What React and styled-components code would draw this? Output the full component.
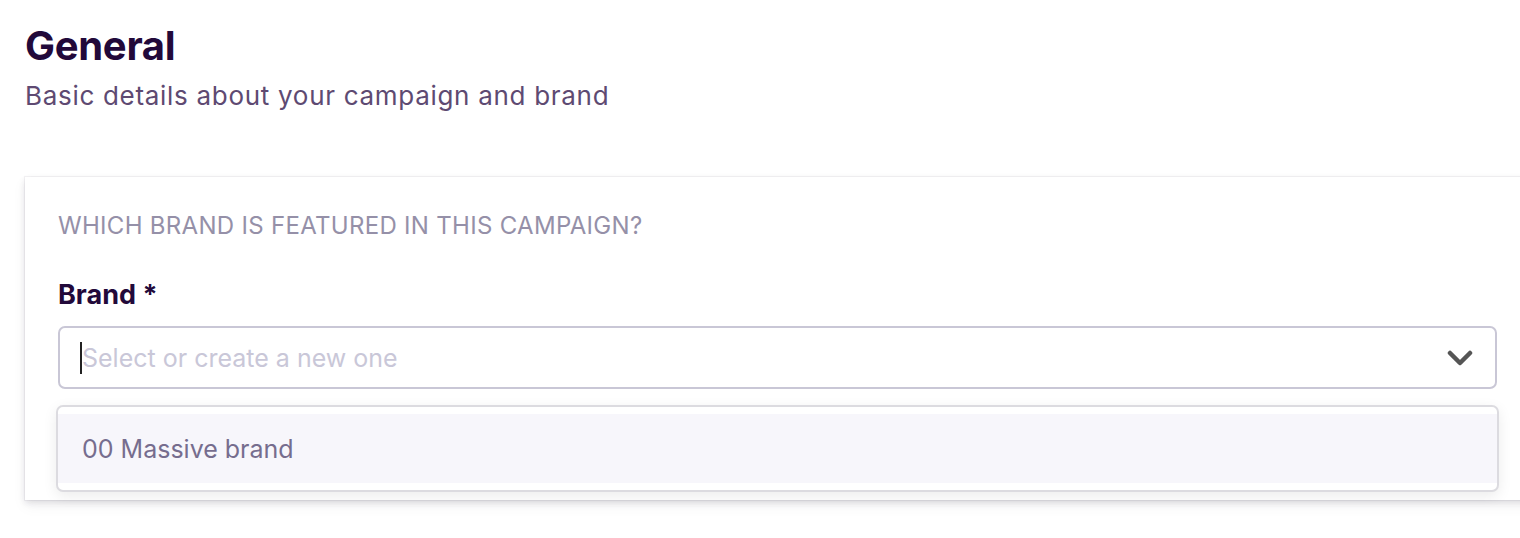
import React from 'react'
import styled, { createGlobalStyle } from 'styled-components'

const Global = createGlobalStyle`
  html, body {
    margin: 0;
    background: #fff;
    overflow: hidden;
  }
  body {
    font-family: Inter, "Liberation Sans", sans-serif;
  }
`

const Page = styled.div`
  padding: 22px 0 40px 25px;
`

const Title = styled.h1`
  margin: 0;
  font-size: 40px;
  line-height: 48px;
  font-weight: 700;
  color: #22093a;
  letter-spacing: -0.3px;
`

const Subtitle = styled.p`
  margin: 9px 0 0;
  font-size: 26px;
  line-height: 34px;
  color: #5e4a72;
  letter-spacing: 0.7px;
`

const Card = styled.section`
  margin-top: 64px;
  width: 1540px;
  box-sizing: border-box;
  padding: 34px 33px 111px;
  box-shadow: 0 0 0 1px rgba(60, 50, 90, 0.06), 0 3px 6px rgba(40, 30, 60, 0.12), 0 6px 14px rgba(40, 30, 60, 0.05);
  background: #fff;
`

const SectionLabel = styled.div`
  font-size: 24px;
  line-height: 30px;
  color: #9590a8;
  text-transform: uppercase;
  letter-spacing: 0.3px;
`

const FieldLabel = styled.label`
  display: block;
  margin-top: 37px;
  font-size: 27px;
  line-height: 34px;
  font-weight: 700;
  color: #22093a;
`

const SelectWrap = styled.div`
  position: relative;
  margin-top: 14px;
  width: 1439px;
`

const Control = styled.div`
  display: flex;
  align-items: center;
  height: 63px;
  box-sizing: border-box;
  padding: 0 22px 0 20px;
  border: 2px solid #c9c7d6;
  border-radius: 7px;
  background: #fff;
`

const Caret = styled.span`
  width: 2px;
  height: 32px;
  background: #222;
`

const Placeholder = styled.span`
  flex: 1;
  font-size: 25px;
  color: #c9c7d8;
`

const Menu = styled.div`
  position: absolute;
  left: -2px;
  right: -2px;
  top: 79px;
  padding: 7px 0;
  border: 2px solid #dcdbe0;
  border-radius: 7px;
  background: #fff;
  box-shadow: 0 4px 14px rgba(0, 0, 0, 0.08);
`

const Option = styled.div`
  height: 69px;
  display: flex;
  align-items: center;
  padding: 0 24px;
  font-size: 25px;
  color: #766d8e;
  background: ${p => (p.active ? '#f7f6fb' : '#fff')};
`

const Chevron = () => (
  <svg width="26" height="16" viewBox="0 0 26 16" fill="none">
    <path d="M3 3l10 10 10-10" stroke="#555" strokeWidth="4.5" strokeLinecap="round" strokeLinejoin="round" />
  </svg>
)

export default function App() {
  return (
    <Page>
      <Global />
      <Title>General</Title>
      <Subtitle>Basic details about your campaign and brand</Subtitle>
      <Card>
        <SectionLabel>Which brand is featured in this campaign?</SectionLabel>
        <FieldLabel>Brand *</FieldLabel>
        <SelectWrap>
          <Control>
            <Caret />
            <Placeholder>Select or create a new one</Placeholder>
            <Chevron />
          </Control>
          <Menu>
            <Option active>00 Massive brand</Option>
          </Menu>
        </SelectWrap>
      </Card>
    </Page>
  )
}
